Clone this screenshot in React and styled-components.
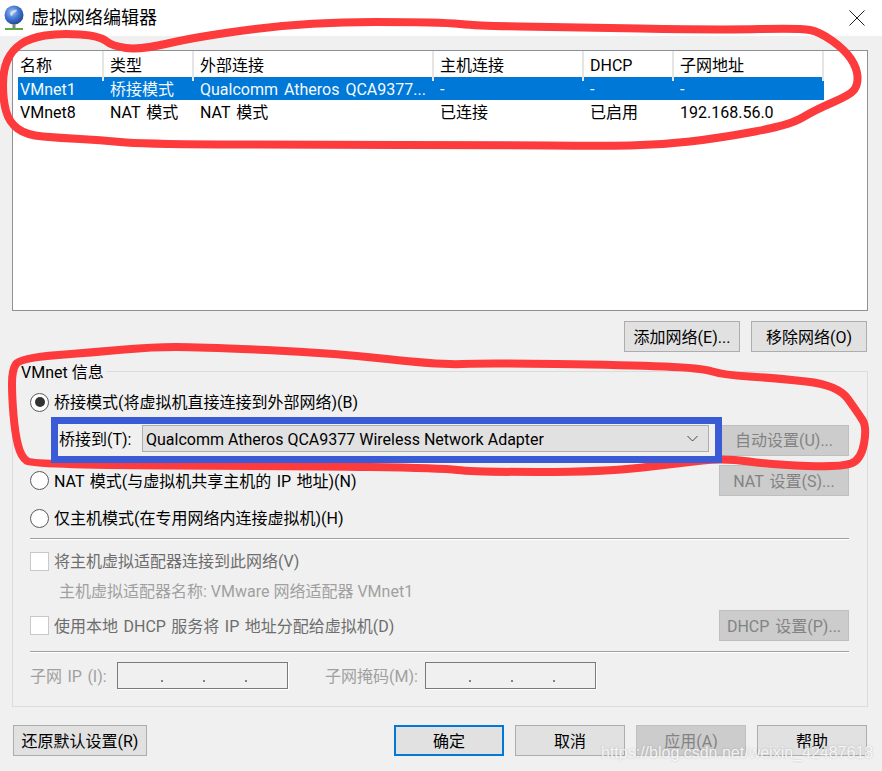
import React from 'react';
import styled, { createGlobalStyle } from 'styled-components';

const Global = createGlobalStyle`
  html, body { margin: 0; padding: 0; background: #f0f0f0; }
  * { box-sizing: border-box; }
`;

const Window = styled.div`
  position: relative;
  width: 882px;
  height: 771px;
  overflow: hidden;
  background: #f0f0f0;
  color: #000;
  font-family: Roboto, "Noto Sans CJK SC", sans-serif;
  font-size: 16px;
  word-spacing: 1.5px;
  line-height: 24px;
  white-space: nowrap;
`;

const TitleBar = styled.div`
  height: 36px;
  background: #fff;
  display: flex;
  align-items: center;
  padding: 0 17px 0 4px;
  gap: 7px;
`;

const TitleText = styled.div`
  flex: 1;
  font-size: 18px;
`;

const Content = styled.div`
  padding: 14px 14px 0 12px;
`;

const List = styled.div`
  height: 261px;
  border: 1px solid #8d9196;
  background: #fff;
  padding-left: 5px;
`;

const Columns = styled.div`
  display: grid;
  grid-template-columns: 86px 90px 240px 150px 90px 150px;
  width: 806px;
  height: ${p => (p.$head ? '26px' : '23px')};
  line-height: 26px;
  word-spacing: 2px;
  background: ${p => (p.$selected ? '#0078d7' : 'transparent')};
  color: ${p => (p.$selected ? '#f4f9fd' : '#000')};
`;

const HeadCell = styled.div`
  padding-left: 6px;
  line-height: 30px;
  border-right: 2px solid #e5e5e5;
  &:first-child { padding-left: 2px; }
`;

const Cell = styled.div`
  padding-left: 6px;
  &:first-child { padding-left: 2px; }
`;

const ListActions = styled.div`
  display: flex;
  justify-content: flex-end;
  gap: 11px;
  margin: 10px 1px 0 0;
`;

const Button = styled.div`
  width: ${p => p.$w}px;
  height: 31px;
  padding-top: 2px;
  display: flex;
  align-items: center;
  justify-content: center;
  flex: none;
  word-spacing: 2px;
  background: ${p => (p.$disabled ? '#cccccc' : '#e1e1e1')};
  border: ${p => (p.$primary ? '2px solid #0078d7' : p.$disabled ? '1px solid #bfbfbf' : '1px solid #adadad')};
  color: ${p => (p.$disabled ? '#838383' : '#000')};
`;

const Group = styled.div`
  position: relative;
  margin-top: 19px;
  height: 336px;
  border: 1px solid #dcdcdc;
  padding: 18px 18px 0 17px;
`;

const Legend = styled.div`
  position: absolute;
  left: 5px;
  top: -11px;
  padding: 0 2px 0 3px;
  word-spacing: 0;
  background: #f0f0f0;
`;

const OptionRow = styled.div`
  display: flex;
  align-items: center;
  gap: 5px;
  height: ${p => p.$h || 24}px;
  margin-top: ${p => p.$mt || 0}px;
  color: ${p => (p.$muted ? '#6d6d6d' : '#000')};
`;

const OptionText = styled.span`
  padding-top: 2px;
`;

const Spacer = styled.div`
  flex: 1;
`;

const Radio = styled.span`
  width: 19px;
  height: 19px;
  flex: none;
  border-radius: 50%;
  border: 1.5px solid #5a5a5a;
  background: #fff;
  display: flex;
  align-items: center;
  justify-content: center;
  &::after {
    content: '';
    width: 10px;
    height: 10px;
    border-radius: 50%;
    background: ${p => (p.$on ? '#333' : 'transparent')};
  }
`;

const Check = styled.span`
  width: 19px;
  height: 19px;
  flex: none;
  border: 1px solid #c9c9c9;
  background: #fff;
`;

const BridgeLine = styled.div`
  display: flex;
  align-items: center;
  margin: 3px 0 0 21px;
`;

const BridgeBox = styled.div`
  position: relative;
  z-index: 6;
  width: 671px;
  height: 46px;
  margin-right: -3px;
  border: 7px solid #3a5ad6;
  display: flex;
  align-items: center;
  padding: 0 6px 3px 1px;
  background: #f0f0f0;
  flex: none;
`;

const BridgeLabel = styled.span`
  width: 83px;
  padding-top: 2px;
  flex: none;
`;

const Combo = styled.div`
  flex: 1;
  height: 27px;
  background: #e1e1e1;
  border: 1px solid #adadad;
  display: flex;
  align-items: center;
  justify-content: space-between;
  padding: 0 10px 0 3px;
  word-spacing: 0;
`;

const ComboText = styled.span`
  padding-top: 2px;
`;

const Separator = styled.div`
  height: 2px;
  margin-top: ${p => p.$mt}px;
  background: #a0a0a0;
  border-bottom: 1px solid #fff;
`;

const HostName = styled.div`
  margin: 7px 0 -1px 29px;
  word-spacing: 0;
  color: #a0a0a0;
`;

const SubnetRow = styled.div`
  display: flex;
  align-items: center;
  height: 27px;
  margin-top: 9px;
`;

const FieldLabel = styled.span`
  width: ${p => p.$w}px;
  padding-top: 2px;
  flex: none;
  color: #a0a0a0;
`;

const IpInput = styled.div`
  width: 171px;
  height: 27px;
  flex: none;
  margin-right: ${p => p.$mr || 0}px;
  border: 1px solid #7a7a7a;
  box-shadow: 1px 1px 0 #fff;
  display: grid;
  grid-template-columns: 45px 42px 42px 1fr;
`;

const IpDot = styled.span`
  justify-self: end;
  width: 2px;
  height: 2px;
  margin-top: 17px;
  background: #8a8078;
`;

const Footer = styled.div`
  display: flex;
  margin: 18px 1px 0 1px;
  gap: 11px;
`;

const TitleClose = styled.svg`
  width: 16px;
  height: 16px;
  display: block;
`;

const GlobeIcon = styled.svg`
  display: block;
  margin-bottom: 1px;
  flex: none;
`;

const Annotations = styled.svg`
  position: absolute;
  left: 0;
  top: 0;
  z-index: 5;
  pointer-events: none;
`;

const Watermark = styled.div`
  position: absolute;
  z-index: 7;
  left: 601px;
  top: 741px;
  font-family: "Liberation Sans", sans-serif;
  font-size: 16px;
  word-spacing: 0;
  color: rgba(255, 255, 255, 0.85);
  text-shadow: 0 0 2px rgba(120, 120, 120, 0.45);
`;

const columns = [
  ['名称', '类型', '外部连接', '主机连接', 'DHCP', '子网地址'],
  ['VMnet1', '桥接模式', 'Qualcomm Atheros QCA9377...', '-', '-', '-'],
  ['VMnet8', 'NAT 模式', 'NAT 模式', '已连接', '已启用', '192.168.56.0'],
];

const Globe = () => (
  <GlobeIcon width="20" height="25" viewBox="0 0 20 25">
    <defs>
      <radialGradient id="g" cx="0.4" cy="0.35" r="0.75">
        <stop offset="0" stopColor="#9fc0ee" />
        <stop offset="0.5" stopColor="#3f74d0" />
        <stop offset="1" stopColor="#1c3b86" />
      </radialGradient>
    </defs>
    <circle cx="10" cy="10" r="9.5" fill="url(#g)" />
    <path d="M6 8c2-3 5-4 7-3-1 3-4 3-5 6-1 0-2-1-2-3z" fill="#dce8f8" opacity="0.8" />
    <rect x="8.5" y="19" width="3" height="4" fill="#7a8a80" />
    <rect x="1" y="23" width="18" height="2" fill="#5fa83f" />
  </GlobeIcon>
);

const RED = [
  [[112,46],[100,36],[60,33],[30,38],[12,50],[3,70],[3,100],[9,122],[26,135],[60,138],[100,140],[140,144],[300,145],[500,145],[600,146],[660,145],[720,138],[790,125],[815,110],[850,95],[858,85],[857,68],[845,50],[820,32],[800,28],[720,30],[560,27],[480,26],[440,22],[310,22],[200,36],[140,50]],
  [[152,347],[97,352],[20,358],[12,370],[12,397],[15,433],[21,457],[33,465],[300,466],[441,468],[474,472],[604,472],[681,463],[724,458],[774,465],[841,467],[861,460],[867,427],[858,413],[838,385],[774,378],[724,375],[701,368],[628,365],[484,363],[441,365],[333,353],[200,347]],
];

// Smooth a closed hand-drawn stroke through the midpoints of its points.
const smooth = pts => {
  const mid = (a, b) => [(a[0] + b[0]) / 2, (a[1] + b[1]) / 2];
  const start = mid(pts[pts.length - 1], pts[0]);
  let d = `M${start[0]} ${start[1]}`;
  pts.forEach((p, i) => {
    const m = mid(p, pts[(i + 1) % pts.length]);
    d += ` Q${p[0]} ${p[1]} ${m[0]} ${m[1]}`;
  });
  return d + ' Z';
};

export default function App() {
  return (
    <Window>
      <Global />
      <TitleBar>
        <Globe />
        <TitleText>虚拟网络编辑器</TitleText>
        <TitleClose viewBox="0 0 16 16">
          <path d="M.5.5l15 15M15.5.5l-15 15" stroke="#222" strokeWidth="1" fill="none" />
        </TitleClose>
      </TitleBar>
      <Content>
        <List>
          <Columns $head>
            {columns[0].map(c => <HeadCell key={c}>{c}</HeadCell>)}
          </Columns>
          {columns.slice(1).map((row, i) => (
            <Columns key={row[0]} $selected={i === 0}>
              {row.map((c, j) => <Cell key={j}>{c}</Cell>)}
            </Columns>
          ))}
        </List>
        <ListActions>
          <Button $w={116}>添加网络(E)...</Button>
          <Button $w={116}>移除网络(O)</Button>
        </ListActions>
        <Group>
          <Legend>VMnet 信息</Legend>
          <OptionRow><Radio $on /><OptionText>桥接模式(将虚拟机直接连接到外部网络)(B)</OptionText></OptionRow>
          <BridgeLine>
            <BridgeBox>
              <BridgeLabel>桥接到(T):</BridgeLabel>
              <Combo>
                <ComboText>Qualcomm Atheros QCA9377 Wireless Network Adapter</ComboText>
                <svg width="11" height="7" viewBox="0 0 11 7"><path d="M.5 1l5 5 5-5" stroke="#444" fill="none" /></svg>
              </Combo>
            </BridgeBox>
            <Spacer />
            <Button $w={130} $disabled>自动设置(U)...</Button>
          </BridgeLine>
          <OptionRow $h={31} $mt={2}>
            <Radio /><OptionText>NAT 模式(与虚拟机共享主机的 IP 地址)(N)</OptionText>
            <Spacer />
            <Button $w={130} $disabled>NAT 设置(S)...</Button>
          </OptionRow>
          <OptionRow $mt={10}><Radio /><OptionText>仅主机模式(在专用网络内连接虚拟机)(H)</OptionText></OptionRow>
          <Separator $mt={8} />
          <OptionRow $mt={9} $muted><Check /><OptionText>将主机虚拟适配器连接到此网络(V)</OptionText></OptionRow>
          <HostName>主机虚拟适配器名称: VMware 网络适配器 VMnet1</HostName>
          <OptionRow $h={31} $mt={7} $muted>
            <Check /><OptionText>使用本地 DHCP 服务将 IP 地址分配给虚拟机(D)</OptionText>
            <Spacer />
            <Button $w={130} $disabled>DHCP 设置(P)...</Button>
          </OptionRow>
          <Separator $mt={10} />
          <SubnetRow>
            <FieldLabel $w={87}>子网 IP (I):</FieldLabel>
            <IpInput $mr={37}><IpDot /><IpDot /><IpDot /></IpInput>
            <FieldLabel $w={100}>子网掩码(M):</FieldLabel>
            <IpInput><IpDot /><IpDot /><IpDot /></IpInput>
          </SubnetRow>
        </Group>
        <Footer>
          <Button $w={134}>还原默认设置(R)</Button>
          <Spacer />
          <Button $w={110} $primary>确定</Button>
          <Button $w={110}>取消</Button>
          <Button $w={110} $disabled>应用(A)</Button>
          <Button $w={110}>帮助</Button>
        </Footer>
      </Content>
      <Annotations width="882" height="771" viewBox="0 0 882 771">
        {RED.map((pts, i) => (
          <path key={i} d={smooth(pts)} fill="none" stroke="#fd3a3c" strokeWidth="8" strokeLinejoin="round" />
        ))}
      </Annotations>
      <Watermark>https://blog.csdn.net/weixin_42487618</Watermark>
    </Window>
  );
}
